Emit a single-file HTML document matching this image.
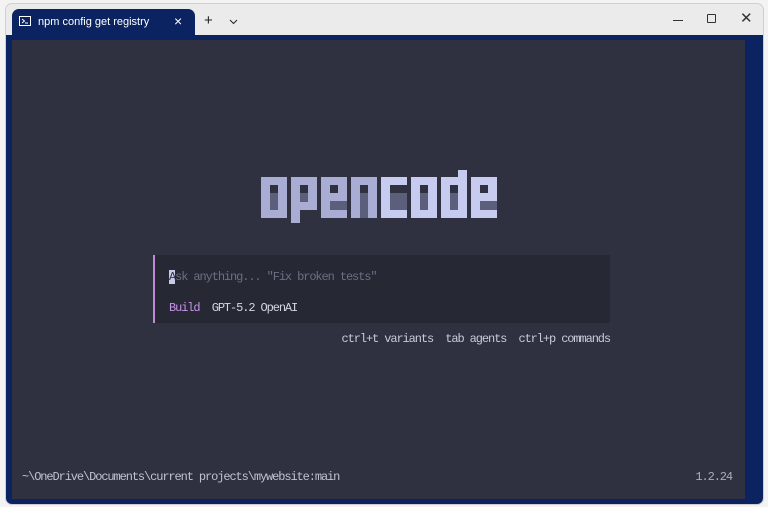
<!DOCTYPE html><html><head><style>
*{margin:0;padding:0;box-sizing:border-box}
body{width:768px;height:507px;background:#f3f3f3;position:relative;overflow:hidden;font-family:"Liberation Sans",sans-serif}
.win{position:absolute;left:5px;top:3px;width:759px;height:502px;background:#ebebeb;border:1px solid #cfcfcf;border-radius:7px;overflow:hidden}
.nav{position:absolute;left:0;top:31px;width:757px;height:471px;background:#0b2461}
.tab{position:absolute;left:6px;top:5px;width:183px;height:27px;background:#0b2461;border-radius:7px 7px 0 0}
.term{position:absolute;left:12px;top:40px;width:733px;height:459px;background:#2f3141}
.m{font-family:"Liberation Mono",monospace;font-size:12px;letter-spacing:-1.1px;position:absolute;white-space:pre;line-height:14px}
</style></head><body>
<div class="win">
<div class="nav"></div>
<div class="tab"></div>
<svg style="position:absolute;left:13px;top:12px" width="12" height="10"><rect x="0.5" y="0.5" width="11" height="9" fill="none" stroke="#fff"/><path d="M3 3l2.5 2L3 7M6 7h3" stroke="#fff" fill="none"/></svg>
<div style="position:absolute;left:32px;top:12px;color:#fff;font-size:11px">npm config get registry</div>
<div style="position:absolute;left:168px;top:9px;color:#fff;font-size:14px">×</div>
<div style="position:absolute;left:198px;top:8px;color:#222;font-size:15px">+</div>
<svg style="position:absolute;left:223px;top:15px" width="9" height="6"><path d="M1 1l3.5 3.5L8 1" stroke="#222" fill="none"/></svg>
<div style="position:absolute;left:667px;top:16px;width:10px;height:1px;background:#333"></div>
<div style="position:absolute;left:701px;top:10px;width:9px;height:9px;border:1px solid #333;border-radius:1px"></div>
<div style="position:absolute;left:734px;top:5px;color:#333;font-size:15px">✕</div>
</div>
<div class="term"></div>
<svg style="position:absolute;left:0;top:0" width="768" height="507">
<g fill="#a9add4">
<rect x="261" y="177" width="26" height="41"/>
<rect x="291" y="177" width="26" height="33"/><rect x="291" y="210" width="9" height="13"/>
<rect x="321" y="177" width="26" height="41"/>
<rect x="351" y="177" width="26" height="41"/>
</g>
<g fill="#c8cbf0">
<rect x="381" y="177" width="26" height="41"/>
<rect x="411" y="177" width="26" height="41"/>
<rect x="441" y="177" width="26" height="41"/><rect x="458" y="170" width="9" height="7"/>
<rect x="471" y="177" width="26" height="41"/>
</g>
<g fill="#2f3141">
<rect x="270" y="185" width="8" height="8"/><rect x="300" y="185" width="8" height="8"/>
<rect x="330" y="185" width="8" height="8"/><rect x="360" y="185" width="8" height="8"/>
<rect x="390" y="185" width="17" height="8"/><rect x="420" y="185" width="8" height="8"/>
<rect x="450" y="185" width="8" height="8"/><rect x="480" y="185" width="8" height="8"/>
</g>
<g fill="#5b5f7c">
<rect x="270" y="193" width="8" height="17"/><rect x="300" y="193" width="8" height="9"/>
<rect x="330" y="201" width="17" height="9"/><rect x="360" y="193" width="8" height="25"/>
<rect x="390" y="193" width="17" height="17"/><rect x="420" y="193" width="8" height="17"/>
<rect x="450" y="193" width="8" height="17"/><rect x="480" y="201" width="17" height="9"/>
</g>
<rect x="153" y="255" width="457" height="68" fill="#262834"/>
<rect x="153" y="255" width="2" height="68" fill="#c18bd6"/>
<rect x="169" y="270" width="6" height="14" fill="#c8cbe8"/>
</svg>
<div class="m" style="left:169px;top:270px;color:#6c6f86"><span style="color:#2f3141">A</span>sk anything... "Fix broken tests"</div>
<div class="m" style="left:169px;top:301px;color:#d4d6e4"><span style="color:#c792ea">Build</span>  GPT-5.2 OpenAI</div>
<div class="m" style="right:158px;top:332px;color:#c8cad8">ctrl+t variants  tab agents  ctrl+p commands</div>
<div class="m" style="left:22px;top:470px;color:#c0c2d4">~\OneDrive\Documents\current projects\mywebsite:main</div>
<div class="m" style="right:36px;top:470px;color:#a9abc0">1.2.24</div>
</body></html>
